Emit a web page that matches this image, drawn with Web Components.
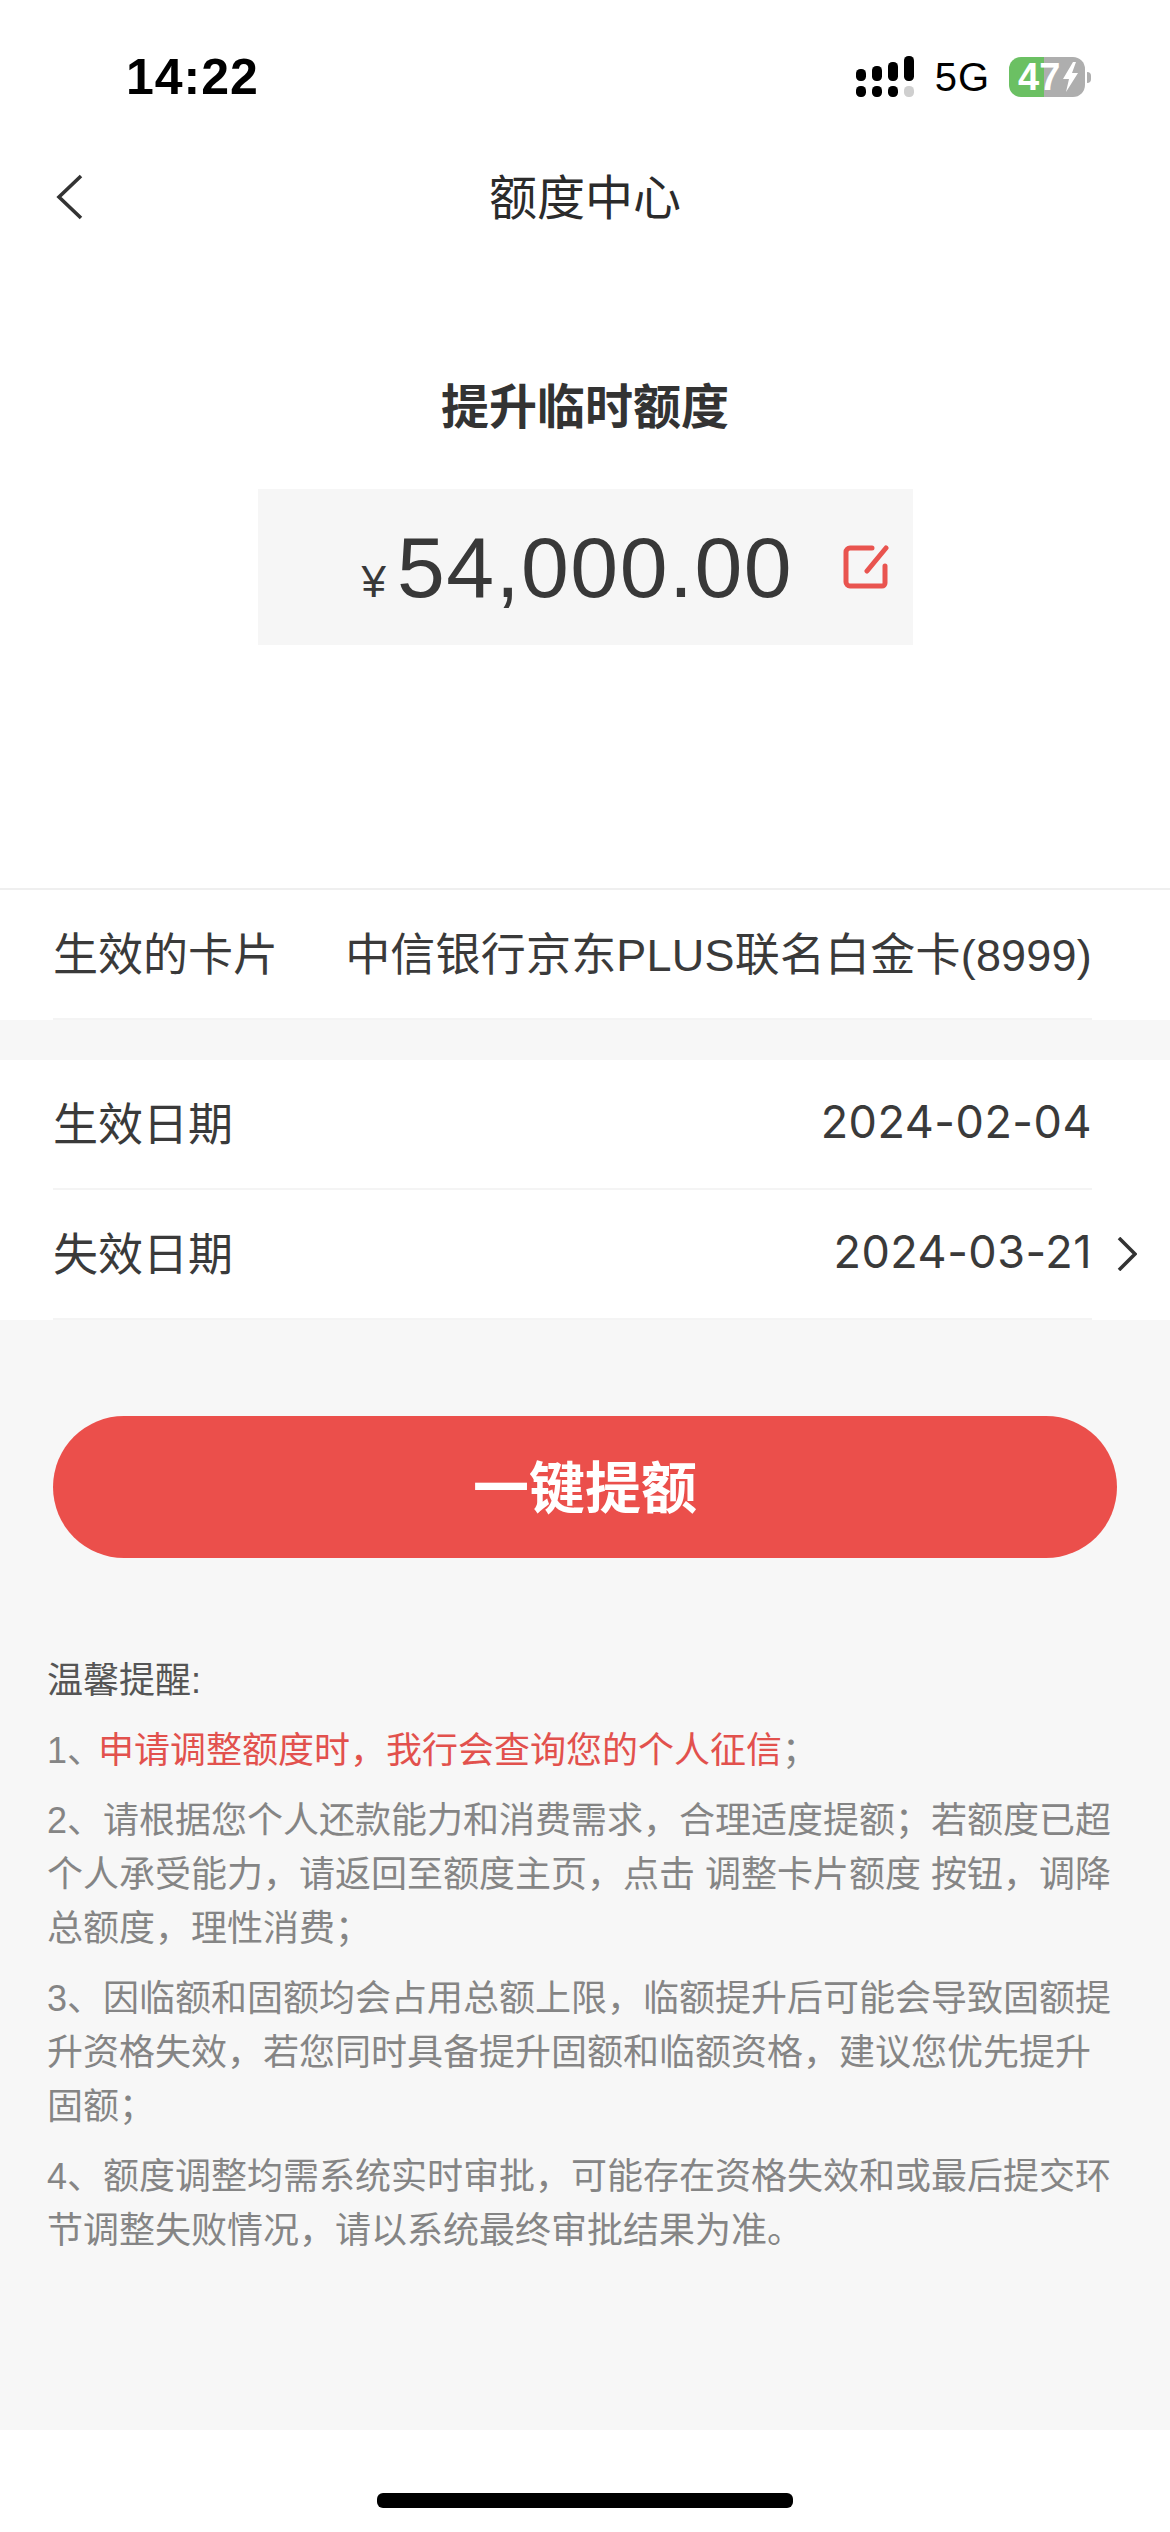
<!DOCTYPE html>
<html lang="zh">
<head>
<meta charset="utf-8">
<title>额度中心</title>
<style>
  html, body { margin: 0; padding: 0; background: #fff; }
  body { font-family: "Liberation Sans", "Noto Sans CJK SC", sans-serif; }
  notice-list em { font-style: normal; color: #e2514d; margin-left: -5px; }
</style>
</head>
<body>
<limit-page>
  <status-bar slot="top" time="14:22"></status-bar>
  <nav-bar slot="top">额度中心</nav-bar>
  <limit-hero slot="top" heading="提升临时额度" amount="54,000.00"></limit-hero>

  <info-group slot="top">
    <info-row label="生效的卡片" value="中信银行京东PLUS联名白金卡(8999)"></info-row>
  </info-group>
  <info-group slot="top" class="second">
    <info-row label="生效日期" value="2024-02-04" date></info-row>
    <info-row label="失效日期" value="2024-03-21" date arrow></info-row>
  </info-group>

  <action-button>一键提额</action-button>

  <notice-list heading="温馨提醒:">
    <p>1、<em>申请调整额度时，我行会查询您的个人征信</em>；</p>
    <p>2、请根据您个人还款能力和消费需求，合理适度提额；若额度已超个人承受能力，请返回至额度主页，点击 调整卡片额度 按钮，调降总额度，理性消费；</p>
    <p>3、因临额和固额均会占用总额上限，临额提升后可能会导致固额提升资格失效，若您同时具备提升固额和临额资格，建议您优先提升固额；</p>
    <p>4、额度调整均需系统实时审批，可能存在资格失效和或最后提交环节调整失败情况，请以系统最终审批结果为准。</p>
  </notice-list>
</limit-page>

<script>
const FONT = '"Liberation Sans", "Noto Sans CJK SC", sans-serif';

class LimitPage extends HTMLElement {
  constructor() {
    super();
    this.attachShadow({mode: 'open'});
    this.shadowRoot.innerHTML = `
    <style>
      :host { display: flex; flex-direction: column; height: 2532px; background: #fff; font-family: ${FONT}; }
      main { flex: 1; background: #f7f7f7; display: flex; flex-direction: column; }
      footer { height: 102px; display: flex; align-items: flex-start; justify-content: center; background: #fff; }
      .home { width: 416px; height: 15px; margin-top: 63px; border-radius: 6px; background: #000; }
    </style>
    <main>
      <slot name="top"></slot>
      <slot></slot>
    </main>
    <footer><div class="home"></div></footer>
    `;
  }
}

class StatusBar extends HTMLElement {
  constructor() {
    super();
    this.attachShadow({mode: 'open'});
    this.shadowRoot.innerHTML = `
    <style>
      :host { display: flex; align-items: center; height: 154px; padding: 0 79px 0 126px; background: #fff; color: #000; }
      .time { font-size: 50px; font-weight: 700; letter-spacing: 1px; flex: 1; }
      svg { display: block; }
      .net { font-size: 40px; letter-spacing: 1px; margin: 0 19px 0 21px; }
      .battery { position: relative; width: 76px; height: 40px; border-radius: 12px; display: flex; align-items: center;
        background: linear-gradient(90deg, #6bc063 46%, #aeaeae 46%); color: #fff; font-size: 38px; font-weight: 700; }
      .battery span { margin-left: 9px; line-height: 40px; }
      .battery svg { position: absolute; left: 53px; top: 5px; }
      .cap { width: 4px; height: 11px; background: #aeaeae; border-radius: 0 4px 4px 0; margin-left: 2px; }
    </style>
    <div class="time"></div>
    <svg width="58" height="42" viewBox="0 0 58 42">
      <g fill="#000">
        <rect x="0" y="13" width="10" height="12" rx="4.5"/>
        <rect x="16" y="10" width="10" height="15" rx="4.5"/>
        <rect x="32" y="6" width="10" height="19" rx="4.5"/>
        <rect x="48" y="0" width="10" height="25" rx="4.5"/>
        <rect x="0" y="30" width="10" height="11" rx="4.5"/>
        <rect x="16" y="30" width="10" height="11" rx="4.5"/>
        <rect x="32" y="30" width="10" height="11" rx="4.5"/>
      </g>
      <rect x="48" y="30" width="10" height="11" rx="4.5" fill="#cfcfcf"/>
    </svg>
    <div class="net">5G</div>
    <div class="battery">
      <span>47</span>
      <svg width="17" height="30" viewBox="0 0 17 30"><path d="M11 0 L1 17 H7 L4 30 L16 11 H10 L14 0 Z" fill="#fff"/></svg>
    </div>
    <div class="cap"></div>
    `;
  }

  connectedCallback() {
    this.shadowRoot.querySelector('.time').textContent = this.getAttribute('time');
  }
}

class NavBar extends HTMLElement {
  constructor() {
    super();
    this.attachShadow({mode: 'open'});
    this.shadowRoot.innerHTML = `
    <style>
      :host { display: grid; grid-template-columns: 1fr auto 1fr; align-items: center; height: 86px; padding: 0 56px; background: #fff; }
      svg { display: block; }
      .title { font-size: 48px; color: #2b2b2b; padding-bottom: 6px; }
    </style>
    <svg width="28" height="46" viewBox="0 0 28 46" fill="none"><path d="M25 2 L3 23 L25 44" stroke="#333" stroke-width="3.6"/></svg>
    <div class="title"><slot></slot></div>
    <span></span>
    `;
  }
}

class LimitHero extends HTMLElement {
  constructor() {
    super();
    this.attachShadow({mode: 'open'});
    this.shadowRoot.innerHTML = `
    <style>
      :host { display: flex; flex-direction: column; align-items: center; background: #fff; padding: 138px 0 243px; }
      h2 { margin: 0 0 51px; font-size: 48px; line-height: 60px; font-weight: 700; color: #333; }
      .box { box-sizing: border-box; width: 655px; height: 156px; padding-left: 104px; background: #f6f6f6; display: flex; align-items: baseline; color: #383838; }
      .sign { font-size: 44px; margin-right: 11px; }
      .num { font-size: 86px; line-height: 156px; letter-spacing: 1.5px; }
      svg { align-self: center; margin-left: 50px; display: block; }
    </style>
    <h2></h2>
    <div class="box">
      <span class="sign">¥</span>
      <span class="num"></span>
      <svg width="46" height="44" viewBox="0 0 46 44" fill="none" stroke="#e9544f" stroke-width="5" stroke-linecap="round">
        <path d="M29 3 H7 a4 4 0 0 0 -4 4 V37 a4 4 0 0 0 4 4 H39 a3 3 0 0 0 3 -3 V21"/>
        <path d="M43 3 L24 26"/>
      </svg>
    </div>
    `;
  }

  connectedCallback() {
    this.shadowRoot.querySelector('h2').textContent = this.getAttribute('heading');
    this.shadowRoot.querySelector('.num').textContent = this.getAttribute('amount');
  }
}

class InfoGroup extends HTMLElement {
  constructor() {
    super();
    this.attachShadow({mode: 'open'});
    this.shadowRoot.innerHTML = `
    <style>
      :host { display: block; background: #fff; border-top: 2px solid #efefef; }
      :host(.second) { margin-top: 40px; border-top: 0; }
    </style>
    <slot></slot>
    `;
  }
}

class InfoRow extends HTMLElement {
  constructor() {
    super();
    this.attachShadow({mode: 'open'});
    this.shadowRoot.innerHTML = `
    <style>
      :host { display: block; padding: 0 78px 0 53px; }
      .row { box-sizing: border-box; height: 130px; padding-bottom: 6px; border-bottom: 2px solid #f4f4f4; display: flex; align-items: center; justify-content: space-between; color: #3a3a3a; font-size: 45px; }
      .value { letter-spacing: .2px; }
      :host([date]) .value { font-family: Inter, "Liberation Sans", sans-serif; font-size: 45px; letter-spacing: .5px; }
      .arrow { display: none; margin: 6px -45px 0 25px; }
      :host([arrow]) .arrow { display: block; }
      .right { display: flex; align-items: center; }
    </style>
    <div class="row">
      <span class="label"></span>
      <div class="right">
        <span class="value"></span>
        <svg class="arrow" width="20" height="34" viewBox="0 0 20 34" fill="none"><path d="M2 1 L18 17 L2 33" stroke="#333" stroke-width="3.6"/></svg>
      </div>
    </div>
    `;
  }

  connectedCallback() {
    this.shadowRoot.querySelector('.label').textContent = this.getAttribute('label');
    this.shadowRoot.querySelector('.value').textContent = this.getAttribute('value');
  }
}

class ActionButton extends HTMLElement {
  constructor() {
    super();
    this.attachShadow({mode: 'open'});
    this.shadowRoot.innerHTML = `
    <style>
      :host { display: flex; align-items: center; justify-content: center; box-sizing: border-box; height: 142px; padding-bottom: 8px; margin: 96px 53px 96px; border-radius: 71px; background: #eb4f4b; color: #fff; font-size: 56px; font-weight: 700; }
    </style>
    <slot></slot>
    `;
  }
}

class NoticeList extends HTMLElement {
  constructor() {
    super();
    this.attachShadow({mode: 'open'});
    this.shadowRoot.innerHTML = `
    <style>
      :host { display: block; padding: 0 47px; font-size: 36px; line-height: 54px; color: #858585; }
      h3 { margin: 0 0 16px; font-size: inherit; font-weight: 400; color: #555; }
      ::slotted(p) { margin: 0 0 16px; }
    </style>
    <h3></h3>
    <slot></slot>
    `;
  }

  connectedCallback() {
    this.shadowRoot.querySelector('h3').textContent = this.getAttribute('heading');
  }
}

customElements.define('limit-page', LimitPage);
customElements.define('status-bar', StatusBar);
customElements.define('nav-bar', NavBar);
customElements.define('limit-hero', LimitHero);
customElements.define('info-group', InfoGroup);
customElements.define('info-row', InfoRow);
customElements.define('action-button', ActionButton);
customElements.define('notice-list', NoticeList);
</script>
</body>
</html>
